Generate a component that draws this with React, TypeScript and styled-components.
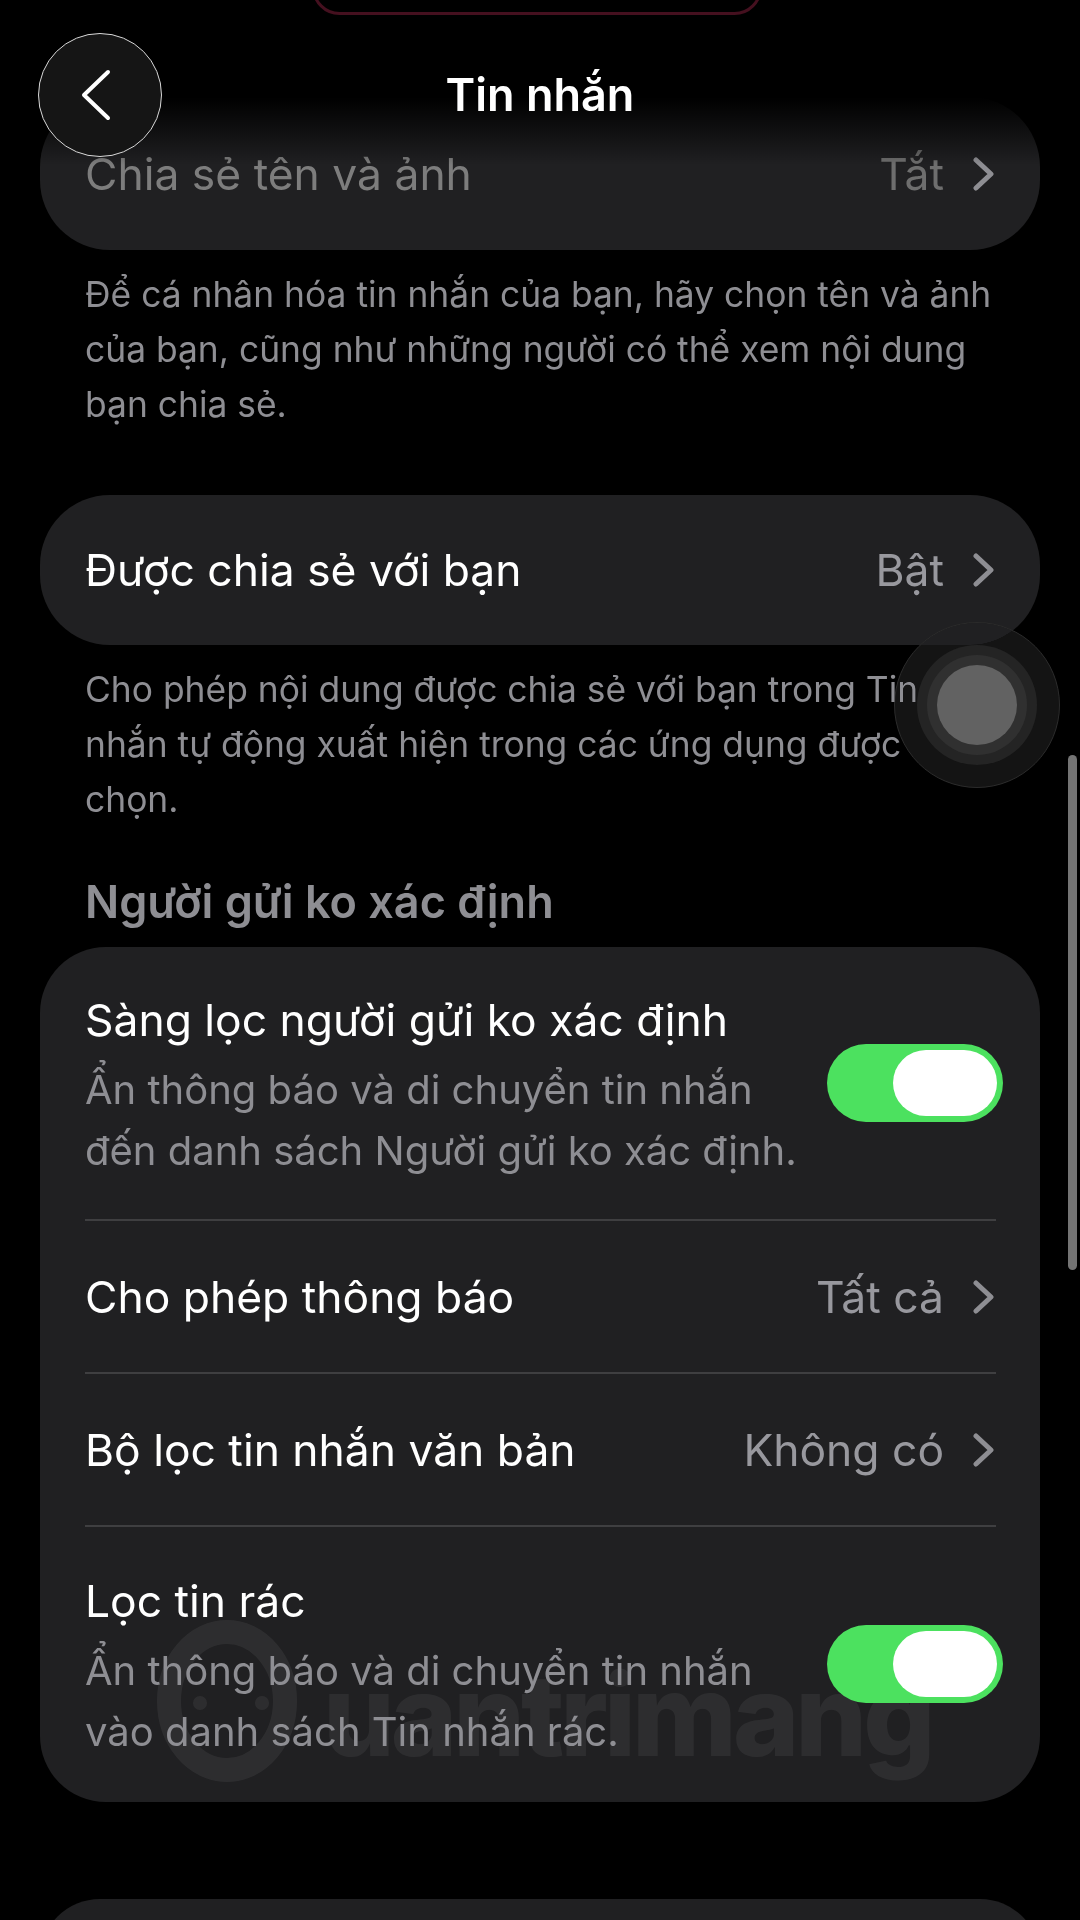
import { createGlobalStyle, styled } from 'styled-components'

const GlobalStyle = createGlobalStyle`
	html, body {
		margin: 0;
		padding: 0;
		background: #000;
	}
	body {
		font-family: Inter, "Noto Sans", "Liberation Sans", sans-serif;
	}
`

const Chevron = () => (
	<ChevronIcon viewBox='0 0 22 34' fill='none'>
		<path d='M3 3l15 14L3 31' stroke='currentColor' strokeWidth='5' strokeLinecap='round' strokeLinejoin='round' />
	</ChevronIcon>
)

const NavRow = ({ label, value, dimmed }: { label: string; value: string; dimmed?: boolean }) => (
	<Row $dimmed={dimmed}>
		<RowLabel>{label}</RowLabel>
		<RowValue $dimmed={dimmed}>{value}</RowValue>
		<Chevron />
	</Row>
)

const ToggleRow = ({ label, lines }: { label: string; lines: string[] }) => (
	<TallRow>
		<div>
			<RowLabel>{label}</RowLabel>
			<RowSub>
				{lines.map((line) => (
					<div key={line}>{line}</div>
				))}
			</RowSub>
		</div>
		<Toggle>
			<Thumb />
		</Toggle>
	</TallRow>
)

export default function App() {
	return (
		<>
			<GlobalStyle />
			<Page>
				<Header>
					<Island />
					<BackButton>
						<svg width='32' height='52' viewBox='0 0 32 52' fill='none'>
							<path d='M28 3L4 26l24 23' stroke='#fff' strokeWidth='4' strokeLinecap='round' strokeLinejoin='round' />
						</svg>
					</BackButton>
					<Title>Tin nhắn</Title>
				</Header>

				<FirstCard>
					<NavRow label='Chia sẻ tên và ảnh' value='Tắt' dimmed />
				</FirstCard>
				<Note>
					Để cá nhân hóa tin nhắn của bạn, hãy chọn tên và ảnh
					<br />
					của bạn, cũng như những người có thể xem nội dung
					<br />
					bạn chia sẻ.
				</Note>

				<SecondCard>
					<NavRow label='Được chia sẻ với bạn' value='Bật' />
				</SecondCard>
				<Note>
					Cho phép nội dung được chia sẻ với bạn trong Tin
					<br />
					nhắn tự động xuất hiện trong các ứng dụng được
					<br />
					chọn.
				</Note>

				<SectionTitle>Người gửi ko xác định</SectionTitle>
				<FilterCard>
					<Watermark>
						<svg width='140' height='163' viewBox='0 0 140 163' fill='none'>
							<ellipse cx='70' cy='81' rx='58' ry='69' stroke='#fff' strokeWidth='24' />
							<circle cx='43' cy='83' r='7' fill='#fff' />
							<circle cx='105' cy='83' r='7' fill='#fff' />
						</svg>
						<WatermarkText>uantrimang</WatermarkText>
					</Watermark>
					<ToggleRow
						label='Sàng lọc người gửi ko xác định'
						lines={['Ẩn thông báo và di chuyển tin nhắn', 'đến danh sách Người gửi ko xác định.']}
					/>
					<Divider />
					<NavRow label='Cho phép thông báo' value='Tất cả' />
					<Divider />
					<NavRow label='Bộ lọc tin nhắn văn bản' value='Không có' />
					<Divider />
					<ToggleRow
						label='Lọc tin rác'
						lines={['Ẩn thông báo và di chuyển tin nhắn', 'vào danh sách Tin nhắn rác.']}
					/>
				</FilterCard>
				<NextCard />

				<ScrollBar />
				<AssistiveTouch>
					<TouchRing $size={120} $color='#242424'>
						<TouchRing $size={100} $color='#303030'>
							<TouchRing $size={80} $color='#626262' />
						</TouchRing>
					</TouchRing>
				</AssistiveTouch>
			</Page>
		</>
	)
}

const Page = styled.div`
	position: relative;
	width: 1080px;
	height: 1920px;
	overflow: hidden;
	background: #000;
	padding: 97px 40px 0;
	box-sizing: border-box;
`

const Header = styled.div`
	position: absolute;
	top: 0;
	left: 0;
	right: 0;
	height: 165px;
	background: linear-gradient(to bottom, #000 59%, rgba(0, 0, 0, 0.55) 78%, rgba(0, 0, 0, 0));
	z-index: 2;
`

const Island = styled.div`
	position: absolute;
	top: -40px;
	left: 312px;
	width: 450px;
	height: 55px;
	box-sizing: border-box;
	border: 3px solid #45101f;
	border-radius: 28px;
`

const BackButton = styled.div`
	position: absolute;
	top: 33px;
	left: 38px;
	width: 124px;
	height: 124px;
	box-sizing: border-box;
	border: 1.5px solid #d8d8d8;
	border-radius: 50%;
	background: #151515;
	display: flex;
	align-items: center;
	justify-content: center;
	padding-right: 8px;
`

const Title = styled.div`
	position: absolute;
	top: 68px;
	left: 0;
	right: 0;
	text-align: center;
	font-size: 45px;
	line-height: 54px;
	font-weight: 600;
	color: #fff;
`

const Card = styled.div`
	background: #202022;
	position: relative;
	overflow: hidden;
`

const FirstCard = styled(Card)`
	height: 153px;
	border-radius: 70px;
	display: flex;
	align-items: center;
`

const SecondCard = styled(Card)`
	height: 150px;
	margin-top: 63px;
	border-radius: 70px;
	display: flex;
	align-items: center;
`

const FilterCard = styled(Card)`
	height: 855px;
	border-radius: 66px;
`

const NextCard = styled(Card)`
	height: 120px;
	margin-top: 97px;
	border-radius: 66px;
`

const Row = styled.div<{ $dimmed?: boolean }>`
	position: relative;
	flex: 1;
	height: 151px;
	box-sizing: border-box;
	padding: 0 45px 0 45px;
	display: flex;
	align-items: center;
	gap: 29px;
	color: ${(p) => (p.$dimmed ? '#7d7d7d' : '#fff')};
`

const RowLabel = styled.div`
	flex: 1;
	font-size: 44.4px;
	line-height: 50px;
	white-space: nowrap;
`

const RowValue = styled.div<{ $dimmed?: boolean }>`
	font-size: 44.4px;
	line-height: 50px;
	color: ${(p) => (p.$dimmed ? '#6e6e6e' : '#98989e')};
`

const ChevronIcon = styled.svg`
	width: 22px;
	height: 34px;
	color: #8e8e93;
	flex: none;
`

const TallRow = styled.div`
	position: relative;
	height: 272px;
	box-sizing: border-box;
	padding: 48px 37px 0 45px;
	display: flex;
	justify-content: space-between;
	color: #fff;

	&:last-child {
		padding-top: 49px;
	}
`

const RowSub = styled.div`
	margin-top: 14px;
	font-size: 40px;
	line-height: 61px;
	color: #8e8e93;
	white-space: nowrap;
`

const Toggle = styled.div`
	width: 176px;
	height: 78px;
	margin-top: 49px;
	border-radius: 39px;
	background: #4ce15f;
	display: flex;
	align-items: center;
	justify-content: flex-end;
	padding-right: 6px;
	box-sizing: border-box;
`

const Thumb = styled.div`
	width: 104px;
	height: 66px;
	border-radius: 33px;
	background: #fff;
`

const Divider = styled.div`
	position: relative;
	height: 2px;
	margin: 0 44px 0 45px;
	background: #3f3f41;
`

const Note = styled.div`
	margin: 17px 45px 0;
	font-size: 35.4px;
	line-height: 55px;
	color: #8e8e93;
	white-space: nowrap;
`

const SectionTitle = styled.div`
	margin: 50px 45px 20px;
	font-size: 45px;
	line-height: 50px;
	font-weight: 600;
	color: #8e8e93;
`

const Watermark = styled.div`
	position: absolute;
	left: 117px;
	top: 673px;
	display: flex;
	align-items: flex-end;
	gap: 26px;
	opacity: 0.06;
`

const WatermarkText = styled.div`
	margin-bottom: 11px;
	font-size: 113px;
	line-height: 113px;
	font-weight: 800;
	letter-spacing: -4px;
	color: #fff;
	white-space: nowrap;
`

const ScrollBar = styled.div`
	position: absolute;
	top: 755px;
	right: 3px;
	width: 9px;
	height: 515px;
	border-radius: 5px;
	background: #747474;
`

const AssistiveTouch = styled.div`
	position: absolute;
	top: 622px;
	left: 894px;
	width: 166px;
	height: 166px;
	box-sizing: border-box;
	border: 1px solid #2c2c2c;
	border-radius: 50%;
	background: #141414;
	mix-blend-mode: lighten;
	display: flex;
	align-items: center;
	justify-content: center;
`

const TouchRing = styled.div<{ $size: number; $color: string }>`
	width: ${(p) => p.$size}px;
	height: ${(p) => p.$size}px;
	border-radius: 50%;
	background: ${(p) => p.$color};
	display: flex;
	align-items: center;
	justify-content: center;
`
